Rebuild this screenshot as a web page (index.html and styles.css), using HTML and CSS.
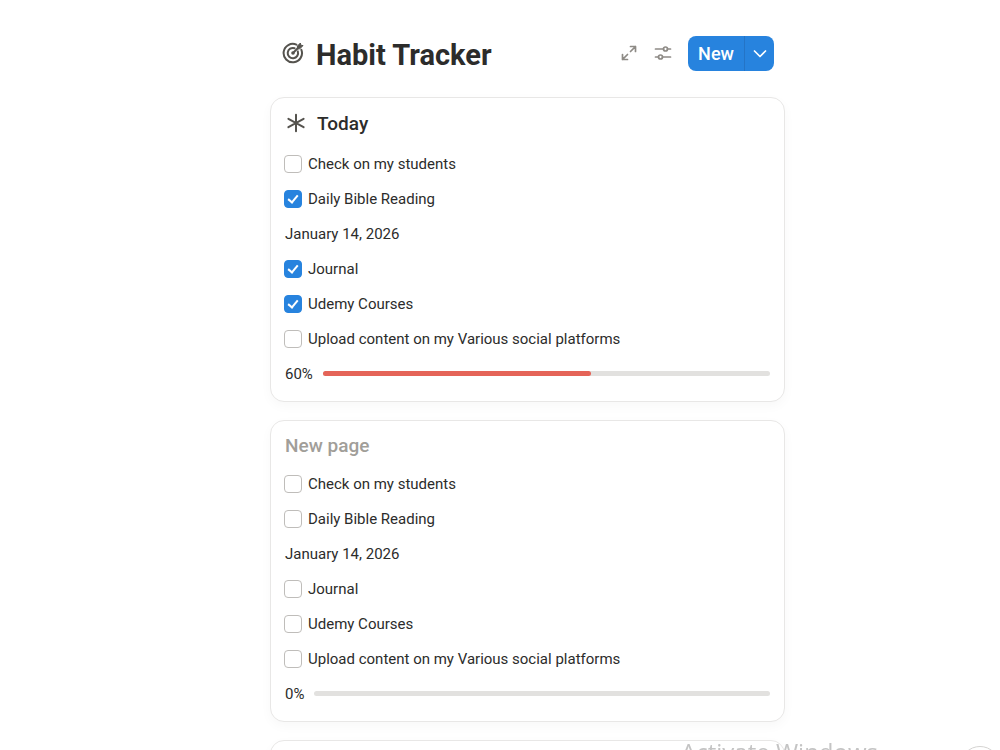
FILE: index.html
```html
<!DOCTYPE html>
<html lang="en">

<head>
    <meta charset="UTF-8">
    <meta name="viewport" content="width=device-width, initial-scale=1.0">
    <title>Habit Tracker</title>
    <link rel="stylesheet" href="styles.css">
</head>

<body>
    <main class="page">
        <header class="page-header">
            <svg class="target-icon" viewBox="0 0 22 22" fill="none" stroke="currentColor" stroke-width="2" stroke-linecap="round">
                <path d="M14.4 2.6A9.2 9.2 0 1 0 19.4 7.8" />
                <path d="M12.6 6.2A5.2 5.2 0 1 0 15.8 9.4" />
                <circle cx="11" cy="11" r="1.8" fill="currentColor" stroke="none" />
                <path d="M11 11L17 5" stroke-width="2" />
                <path d="M15.4 6.6V4L18.4 1L18.8 3.2L21 3.6L18 6.6Z" fill="currentColor" stroke-width="1" stroke-linejoin="round" />
            </svg>
            <h1>Habit Tracker</h1>
            <div class="toolbar">
                <button class="icon-btn" type="button" aria-label="Expand">
                    <svg viewBox="0 0 18 18" fill="none" stroke="currentColor" stroke-width="1.7" stroke-linecap="round" stroke-linejoin="round">
                        <path d="M10.5 7.5L15.5 2.5M10.5 2.5H15.5V7.5M7.5 10.5L2.5 15.5M2.5 10.5V15.5H7.5" />
                    </svg>
                </button>
                <button class="icon-btn" type="button" aria-label="Settings">
                    <svg viewBox="0 0 18 18" fill="none" stroke="currentColor" stroke-width="1.7" stroke-linecap="round">
                        <path d="M1.5 5H9.5M13.5 5H16.5M1.5 13H4.5M8.5 13H16.5" />
                        <circle cx="11.5" cy="5" r="2" />
                        <circle cx="6.5" cy="13" r="2" />
                    </svg>
                </button>
                <div class="new-group">
                    <button class="new-btn" type="button">New</button>
                    <button class="new-more" type="button" aria-label="More options">
                        <svg viewBox="0 0 14 14" fill="none" stroke="currentColor" stroke-width="1.7" stroke-linecap="round" stroke-linejoin="round">
                            <path d="M1.5 5L7 10.5L12.5 5" />
                        </svg>
                    </button>
                </div>
            </div>
        </header>

        <section class="card">
            <h2 class="with-icon">
                <svg viewBox="0 0 22 22" fill="none" stroke="currentColor" stroke-width="2" stroke-linecap="round">
                    <path d="M11 2.8V19.2M3.4 6.8L18.6 15.2M18.6 6.8L3.4 15.2" />
                </svg>
                Today
            </h2>
            <label class="row"><input type="checkbox">Check on my students</label>
            <label class="row"><input type="checkbox" checked>Daily Bible Reading</label>
            <div class="row">January 14, 2026</div>
            <label class="row"><input type="checkbox" checked>Journal</label>
            <label class="row"><input type="checkbox" checked>Udemy Courses</label>
            <label class="row"><input type="checkbox">Upload content on my Various social platforms</label>
            <div class="row progress">
                <span>60%</span>
                <div class="bar"><div class="bar-fill" style="width: 60%"></div></div>
            </div>
        </section>

        <section class="card">
            <h2 class="untitled">New page</h2>
            <label class="row"><input type="checkbox">Check on my students</label>
            <label class="row"><input type="checkbox">Daily Bible Reading</label>
            <div class="row">January 14, 2026</div>
            <label class="row"><input type="checkbox">Journal</label>
            <label class="row"><input type="checkbox">Udemy Courses</label>
            <label class="row"><input type="checkbox">Upload content on my Various social platforms</label>
            <div class="row progress">
                <span>0%</span>
                <div class="bar"></div>
            </div>
        </section>

        <section class="card"></section>
    </main>

    <div class="watermark">Activate Windows</div>
    <button class="help-btn" type="button" aria-label="Help"></button>
</body>

</html>
```

FILE: styles.css
```css
* {
    box-sizing: border-box;
}

body {
    margin: 0;
    height: 100vh;
    overflow: hidden;
    background-color: #fff;
    color: #2c2c2b;
    font-family: Roboto, "Liberation Sans", sans-serif;
    font-size: 15px;
}

button {
    padding: 0;
    border: none;
    background: none;
    font-family: inherit;
    cursor: pointer;
}

.page {
    padding: 33px 21.5% 0 27%;
}

/* Header */
.page-header {
    display: flex;
    align-items: center;
    height: 40px;
    margin-bottom: 24px;
    padding: 0 11px 0 12px;
}

.target-icon {
    width: 22px;
    height: 22px;
    margin-right: 12px;
    color: #55534e;
}

h1 {
    margin: 0;
    padding-top: 4px;
    font-size: 29px;
    line-height: 36px;
    font-weight: 700;
}

.toolbar {
    display: flex;
    align-items: center;
    gap: 16px;
    margin-left: auto;
}

.icon-btn {
    display: flex;
    color: #8e8b86;
}

.icon-btn svg {
    width: 18px;
    height: 18px;
}

.new-group {
    display: flex;
    height: 35px;
    border-radius: 8px;
    overflow: hidden;
    background-color: #2783de;
}

.new-btn,
.new-more {
    color: #fff;
}

.new-btn {
    width: 56px;
    font-size: 18px;
    font-weight: 500;
}

.new-more {
    display: flex;
    align-items: center;
    justify-content: center;
    width: 30px;
    border-left: 1px solid #2474c6;
}

.new-more svg {
    width: 14px;
    height: 14px;
}

/* Cards */
.card {
    min-height: 60px;
    margin-bottom: 18px;
    padding: 8px 14px 10px;
    border: 1px solid #e8e7e6;
    border-radius: 14px;
    background-color: #fff;
    box-shadow: 0 4px 12px rgba(0, 0, 0, 0.03);
}

h2 {
    display: flex;
    align-items: center;
    margin: 0;
    height: 32px;
    font-size: 19px;
    font-weight: 500;
}

.with-icon {
    height: 34px;
    margin-bottom: 6px;
}

.with-icon svg {
    width: 22px;
    height: 22px;
    margin-right: 10px;
    color: #55534e;
}

.untitled {
    margin-bottom: 5px;
    color: #a19e99;
}

.row {
    display: flex;
    align-items: center;
    height: 35px;
}

.row input {
    appearance: none;
    display: flex;
    justify-content: center;
    width: 18px;
    height: 18px;
    margin: 0 6px 0 -1px;
    border: 1px solid #bfbdba;
    border-radius: 4px;
    background-color: #fff;
}

.row input:checked {
    border-color: #2783de;
    background-color: #2783de;
}

/* Tick mark */
.row input:checked::after {
    content: "";
    width: 4px;
    height: 8px;
    margin-top: 2px;
    border: solid #fff;
    border-width: 0 2px 2px 0;
    transform: rotate(40deg);
}

.progress {
    gap: 10px;
}

.bar {
    flex: 1;
    height: 5px;
    border-radius: 3px;
    background-color: #e2e1df;
}

.bar-fill {
    height: 5px;
    border-radius: 3px;
    background-color: #e56458;
}

/* Overlays at the bottom of the window */
.watermark {
    position: fixed;
    right: 122px;
    bottom: -20px;
    color: #c4c4c4;
    font-family: "Open Sans", sans-serif;
    font-size: 24px;
    line-height: 36px;
}

.help-btn {
    position: fixed;
    right: 0;
    bottom: -36px;
    width: 40px;
    height: 40px;
    border: 1px solid #d4d3d1;
    border-radius: 50%;
    background-color: #fff;
}
```
